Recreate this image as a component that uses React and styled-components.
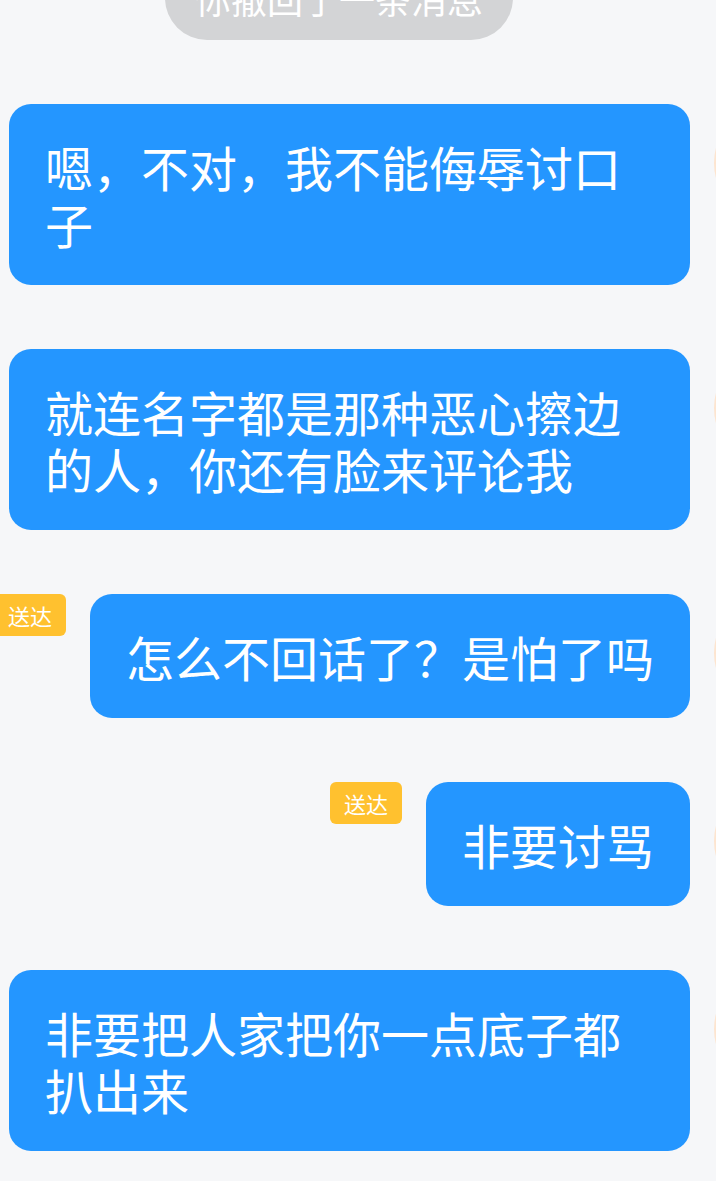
import React from 'react';
import styled, { createGlobalStyle } from 'styled-components';

const GlobalStyle = createGlobalStyle`
  html, body {
    margin: 0;
    padding: 0;
    background: #f6f7f9;
    overflow: hidden;
  }
  body {
    font-family: "Noto Sans CJK SC", "Noto Sans", sans-serif;
  }
`;

const Chat = styled.div`
  width: 832px;
  display: flex;
  flex-direction: column;
  gap: 64px;
  padding-bottom: 40px;
`;

const RecallNotice = styled.div`
  align-self: flex-start;
  margin-left: 165px;
  margin-top: -44px;
  width: 348px;
  height: 84px;
  border-radius: 42px;
  background: #d3d4d6;
  color: #ffffff;
  font-size: 36px;
  line-height: 84px;
  text-align: center;
`;

const Row = styled.div`
  display: flex;
  justify-content: flex-end;
  align-items: flex-start;
  gap: 24px;
  padding-left: 9px;
`;

const Bubble = styled.div`
  position: relative;
  max-width: 681px;
  box-sizing: border-box;
  padding: 33.5px 36px;
  border-radius: 22px;
  background: #2496ff;
  color: #ffffff;
  font-size: 48px;
  line-height: 57px;
  word-break: break-all;
`;

const Badge = styled.span`
  position: absolute;
  top: 0;
  right: calc(100% + 24px);
  width: 72px;
  height: 42px;
  border-radius: 6px;
  background: #ffc12f;
  color: #ffffff;
  font-size: 22px;
  line-height: 42px;
  text-align: center;
`;

const Avatar = styled.div`
  flex-shrink: 0;
  width: 118px;
  height: 118px;
  border-radius: 50%;
  background: #fde5d0;
`;

const messages = [
  { text: '嗯，不对，我不能侮辱讨口子' },
  { text: '就连名字都是那种恶心擦边的人，你还有脸来评论我' },
  { text: '怎么不回话了？是怕了吗', delivered: true },
  { text: '非要讨骂', delivered: true },
  { text: '非要把人家把你一点底子都扒出来' },
];

const App = () => {
  return (
    <>
      <GlobalStyle />
      <Chat>
        <RecallNotice>你撤回了一条消息</RecallNotice>
        {messages.map((m, i) => (
          <Row key={i}>
            <Bubble>
              {m.delivered && <Badge>送达</Badge>}
              {m.text}
            </Bubble>
            <Avatar />
          </Row>
        ))}
      </Chat>
    </>
  );
};

export default App;
